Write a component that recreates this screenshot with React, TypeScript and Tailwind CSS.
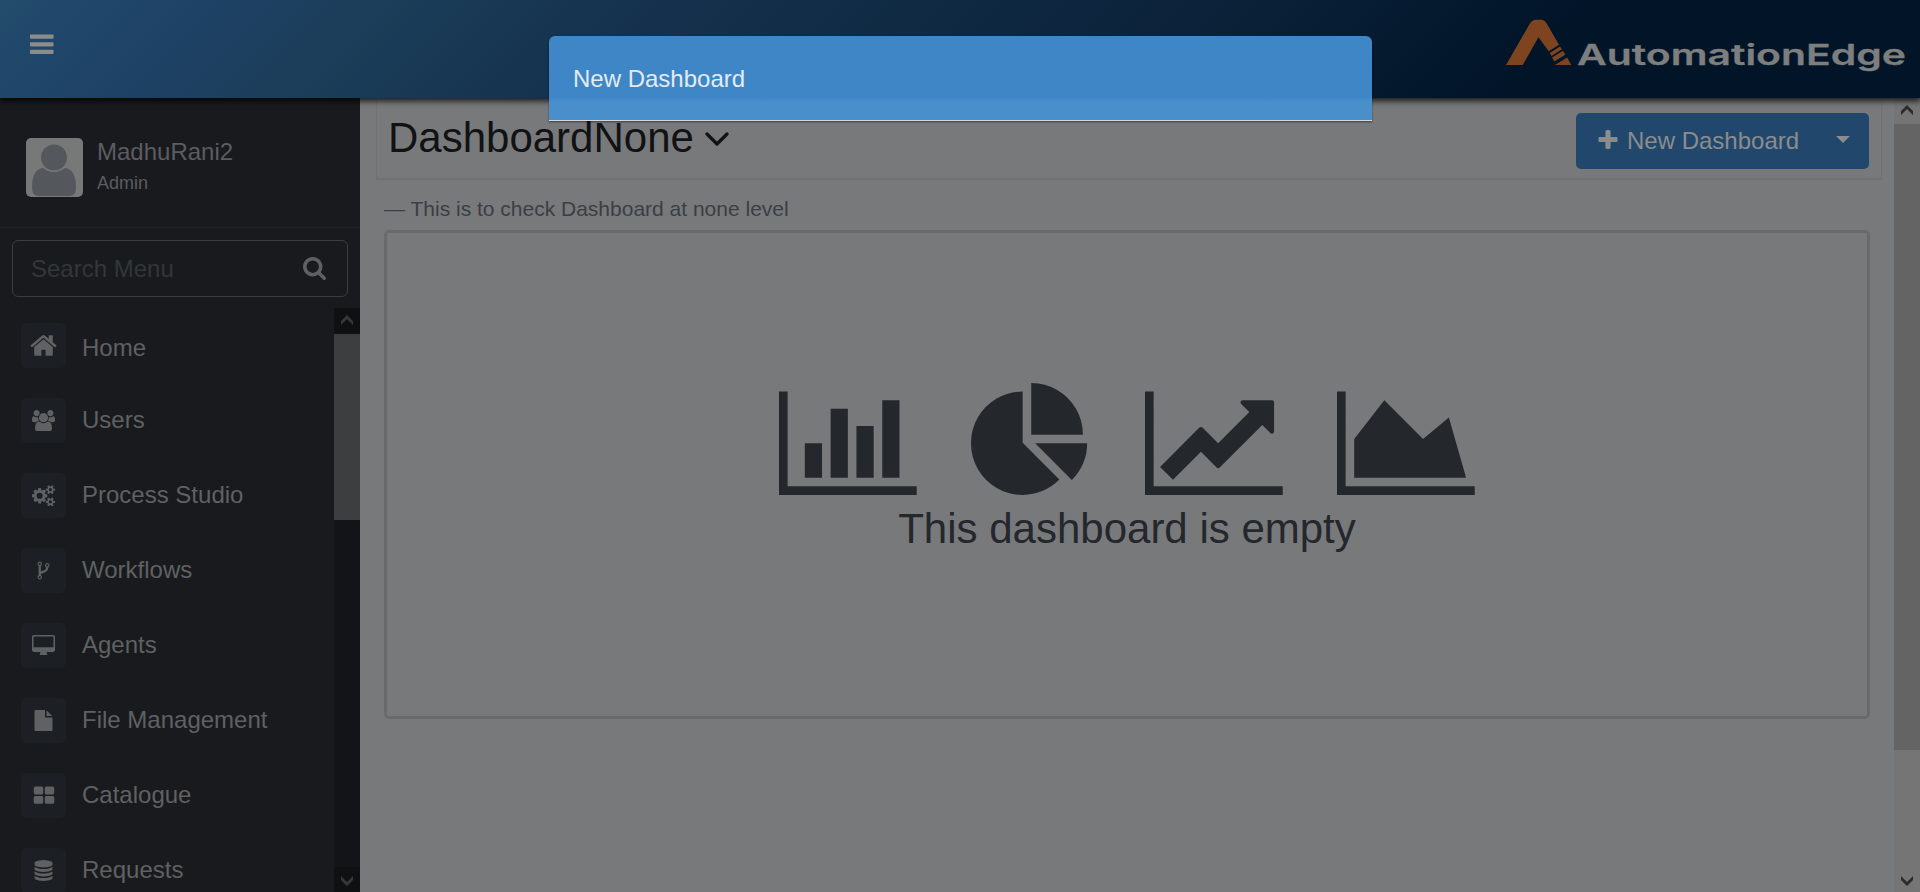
import type { ReactNode } from 'react';

const HOME =
  'M1472 992v480q0 26-19 45t-45 19h-384v-384h-256v384h-384q-26 0-45-19t-19-45v-480q0-1 .5-3t.5-3l575-474 575 474q1 2 1 6zm223-69l-62 74q-8 9-21 11h-3q-13 0-21-7l-692-577-692 577q-12 8-24 7-13-2-21-11l-62-74q-8-10-7-23.5t11-21.5l719-599q32-26 76-26t76 26l244 204v-195q0-14 9-23t23-9h192q14 0 23 9t9 23v408l219 182q10 8 11 21.5t-7 23.500z';
const USERS =
  'M593 896q-162 5-265 128h-134q-82 0-138-40.500t-56-118.500q0-353 124-353 6 0 43.500 21t97.500 42.500 119 21.500q67 0 133-23-5 37-5 66 0 139 81 256zm1071 637q0 120-73 189.500t-194 69.500h-874q-121 0-194-69.500t-73-189.500q0-53 3.500-103.500t14-109 26.500-108.500 43-97.500 62-81 85.500-53.500 111.500-20q10 0 43 21.500t73 48 107 48 135 21.500 135-21.500 107-48 73-48 43-21.500q61 0 111.500 20t85.500 53.500 62 81 43 97.500 26.500 108.500 14 109 3.500 103.500zm-1024-1277q0 106-75 181t-181 75-181-75-75-181 75-181 181-75 181 75 75 181zm704 384q0 159-112.500 271.500t-271.500 112.500-271.500-112.500-112.500-271.500 112.500-271.500 271.500-112.500 271.500 112.500 112.500 271.500zm576 225q0 78-56 118.500t-138 40.500h-134q-103-123-265-128 81-117 81-256 0-29-5-66 66 23 133 23 59 0 119-21.500t97.500-42.500 43.500-21q124 0 124 353zm-128-609q0 106-75 181t-181 75-181-75-75-181 75-181 181-75 181 75 75 181z';
const COGS =
  'M896 896q0-106-75-181t-181-75-181 75-75 181 75 181 181 75 181-75 75-181zm768 512q0-52-38-90t-90-38-90 38-38 90q0 53 37.500 90.500t90.500 37.500 90.500-37.500 37.500-90.500zm0-1024q0-52-38-90t-90-38-90 38-38 90q0 53 37.500 90.500t90.500 37.500 90.500-37.500 37.500-90.500zm-384 421v185q0 10-7 19.500t-16 10.500l-155 24q-11 35-32 76 34 48 90 115 7 11 7 20 0 12-7 19-23 30-82.500 89.500t-78.500 59.500q-11 0-21-7l-115-90q-37 19-77 31-11 108-23 155-7 24-30 24h-186q-11 0-20-7.500t-10-17.500l-23-153q-34-10-75-31l-118 89q-7 7-20 7-11 0-21-8-144-133-144-160 0-9 7-19 10-14 41-53t47-61q-23-44-35-82l-152-24q-10-1-17-9.500t-7-19.500v-185q0-10 7-19.500t16-10.500l155-24q11-35 32-76-34-48-90-115-7-11-7-20 0-12 7-20 22-30 82-89t79-59q11 0 21 7l115 90q34-18 77-32 11-108 23-154 7-24 30-24h186q11 0 20 7.500t10 17.500l23 153q34 10 75 31l118-89q8-7 20-7 11 0 21 8 144 133 144 160 0 8-7 19-12 16-42 54t-45 60q23 48 34 82l152 23q10 2 17 10.500t7 19.500zm640 533v140q0 16-149 31-12 27-30 52 51 113 51 138 0 4-4 7-122 71-124 71-8 0-46-47t-52-68q-20 2-30 2t-30-2q-14 21-52 68t-46 47q-2 0-124-71-4-3-4-7 0-25 51-138-18-25-30-52-149-15-149-31v-140q0-16 149-31 13-29 30-52-51-113-51-138 0-4 4-7 4-2 35-20t59-34 30-16q8 0 46 46.500t52 67.500q20-2 30-2t30 2q51-71 92-112l6-2q4 0 124 70 4 3 4 7 0 25-51 138 17 23 30 52 149 15 149 31zm0-1024v140q0 16-149 31-12 27-30 52 51 113 51 138 0 4-4 7-122 71-124 71-8 0-46-47t-52-68q-20 2-30 2t-30-2q-14 21-52 68t-46 47q-2 0-124-71-4-3-4-7 0-25 51-138-18-25-30-52-149-15-149-31v-140q0-16 149-31 13-29 30-52-51-113-51-138 0-4 4-7 4-2 35-20t59-34 30-16q8 0 46 46.500t52 67.500q20-2 30-2t30 2q51-71 92-112l6-2q4 0 124 70 4 3 4 7 0 25-51 138 17 23 30 52 149 15 149 31z';
const FORK =
  'M672 1472q0-40-28-68t-68-28-68 28-28 68 28 68 68 28 68-28 28-68zm0-1152q0-40-28-68t-68-28-68 28-28 68 28 68 68 28 68-28 28-68zm640 128q0-40-28-68t-68-28-68 28-28 68 28 68 68 28 68-28 28-68zm96 0q0 52-26 96.500t-70 69.500q-2 287-226 414-67 38-203 81-128 40-169.500 71t-41.500 100v26q44 25 70 69.500t26 96.500q0 80-56 136t-136 56-136-56-56-136q0-52 26-96.500t70-69.500v-820q-44-25-70-69.500t-26-96.500q0-80 56-136t136-56 136 56 56 136q0 52-26 96.500t-70 69.500v497q54-26 154-57 55-17 87.500-29.500t70.500-31 59-39.500 40.500-51 28-69.500 8.500-91.500q-44-25-70-69.500t-26-96.500q0-80 56-136t136-56 136 56 56 136z';
const DESKTOP =
  'M1792 992v-832q0-13-9.500-22.500t-22.500-9.500h-1600q-13 0-22.500 9.500t-9.500 22.500v832q0 13 9.500 22.500t22.500 9.500h1600q13 0 22.500-9.500t9.500-22.500zm128-832v1088q0 66-47 113t-113 47h-544q0 37 16 77.500t32 71 16 43.500q0 26-19 45t-45 19h-512q-26 0-45-19t-19-45q0-14 16-44t32-70 16-78h-544q-66 0-113-47t-47-113v-1088q0-66 47-113t113-47h1600q66 0 113 47t47 113z';
const FILE =
  'M1152 512v-472q22 14 36 28l408 408q14 14 28 36h-472zm-128 32q0 40 28 68t68 28h544v1056q0 40-28 68t-68 28h-1344q-40 0-68-28t-28-68v-1600q0-40 28-68t68-28h800v544z';
const GRID =
  'M832 1024v384q0 52-38 90t-90 38h-512q-52 0-90-38t-38-90v-384q0-52 38-90t90-38h512q52 0 90 38t38 90zm0-768v384q0 52-38 90t-90 38h-512q-52 0-90-38t-38-90v-384q0-52 38-90t90-38h512q52 0 90 38t38 90zm896 768v384q0 52-38 90t-90 38h-512q-52 0-90-38t-38-90v-384q0-52 38-90t90-38h512q52 0 90 38t38 90zm0-768v384q0 52-38 90t-90 38h-512q-52 0-90-38t-38-90v-384q0-52 38-90t90-38h512q52 0 90 38t38 90z';
const DATABASE =
  'M896 768q237 0 443-43t325-127v170q0 69-103 128t-280 93.500-385 34.500-385-34.500-280-93.500-103-128v-170q119 84 325 127t443 43zm0 768q237 0 443-43t325-127v170q0 69-103 128t-280 93.500-385 34.500-385-34.500-280-93.500-103-128v-170q119 84 325 127t443 43zm0-384q237 0 443-43t325-127v170q0 69-103 128t-280 93.500-385 34.500-385-34.500-280-93.500-103-128v-170q119 84 325 127t443 43zm0-1152q208 0 385 34.500t280 93.500 103 128v128q0 69-103 128t-280 93.500-385 34.500-385-34.500-280-93.500-103-128v-128q0-69 103-128t280-93.500 385-34.500z';
const SEARCH =
  'M1216 832q0-185-131.500-316.500t-316.500-131.500-316.500 131.500-131.500 316.500 131.500 316.500 316.500 131.500 316.500-131.500 131.500-316.500zm512 832q0 52-38 90t-90 38q-54 0-90-38l-343-342q-179 124-399 124-143 0-273.500-55.500t-225-150-150-225-55.500-273.500 55.500-273.500 150-225 225-150 273.500-55.500 273.500 55.500 225 150 150 225 55.500 273.500q0 220-124 399l343 343q37 37 37 90z';
const PLUS =
  'M1600 736v192q0 40-28 68t-68 28h-416v416q0 40-28 68t-68 28h-192q-40 0-68-28t-28-68v-416h-416q-40 0-68-28t-28-68v-192q0-40 28-68t68-28h416v-416q0-40 28-68t68-28h192q40 0 68 28t28 68v416h416q40 0 68 28t28 68z';

const BAR_CHART =
  'M640 896v512h-256v-512h256zm384-512v1024h-256v-1024h256zm1024 1152v128h-2048v-1536h128v1408h1920zm-640-896v768h-256v-768h256zm384-384v1152h-256v-1152h256z';
const PIE_CHART =
  'M768 890l546 546q-106 108-247.500 168t-298.500 60q-209 0-385.500-103t-279.500-279.500-103-385.500 103-385.500 279.500-279.500 385.500-103v762zm187 6h773q0 157-60 298.500t-168 247.500zm709-128h-768v-768q209 0 385.500 103t279.500 279.500 103 385.500z';
const LINE_CHART =
  'M2048 1536v128h-2048v-1536h128v1408h1920zm-128-1248v435q0 21-19.500 29.500t-35.500-7.500l-121-121-633 633q-10 10-23 10t-23-10l-233-233-416 416-192-192 585-585q10-10 23-10t23 10l233 233 464-464-121-121q-16-16-7.500-35.500t29.500-19.500h435q14 0 23 9t9 23z';
const AREA_CHART = 'M2048 1536v128h-2048v-1536h128v1408h1920zm-384-1024l256 896h-1664v-576l448-576 576 576z';

type MenuEntry = { label: string; path: string; box: string; size: string; text: string };

const MENU: MenuEntry[] = [
  { label: 'Home', path: HOME, box: '0 0 1792 1792', size: 'w-[29px] h-[29px] -mt-px', text: 'pt-[3px]' },
  { label: 'Users', path: USERS, box: '0 0 1920 1792', size: 'w-[23px] h-[21.500px]', text: '' },
  { label: 'Process Studio', path: COGS, box: '0 0 1920 1792', size: 'w-[23px] h-[21.500px]', text: '' },
  { label: 'Workflows', path: FORK, box: '0 0 1792 1792', size: 'w-[21px] h-[21px]', text: '' },
  { label: 'Agents', path: DESKTOP, box: '0 0 1920 1792', size: 'w-[23px] h-[21.500px] mt-px', text: '' },
  { label: 'File Management', path: FILE, box: '0 0 1792 1792', size: 'w-[21px] h-[21px]', text: '' },
  { label: 'Catalogue', path: GRID, box: '0 0 1792 1792', size: 'w-[22px] h-[22px]', text: '' },
  { label: 'Requests', path: DATABASE, box: '0 0 1792 1792', size: 'w-[21px] h-[21px]', text: '' },
];

function Glyph({ path, box, className }: { path: string; box: string; className: string }) {
  return (
    <svg viewBox={box} className={`block shrink-0 ${className}`} fill="currentColor">
      <path d={path} />
    </svg>
  );
}

function Arrow({ down = false }: { down?: boolean }) {
  return (
    <svg viewBox="0 0 12 10" className="h-[10px] w-[12px]" fill="currentColor">
      <path d={down ? 'M0 0L6 6L12 0V4L6 10L0 4Z' : 'M0 10L6 4L12 10V6L6 0L0 6Z'} />
    </svg>
  );
}

function ScrollButton({ className, children }: { className: string; children: ReactNode }) {
  return <div className={`flex shrink-0 items-start justify-center ${className}`}>{children}</div>;
}

function Header() {
  return (
    <header className="relative z-10 flex h-[98px] shrink-0 items-start justify-between bg-[linear-gradient(135deg,#224b6c_0%,#1e4266_10%,#1b3d58_20%,#15324e_31%,#0a2138_62%,#011428_79%,#011428_100%)] shadow-[0_2px_6px_1px_rgba(0,0,0,0.8)]">
      <svg viewBox="0 0 24 20" className="mt-[34px] ml-[30px] h-[20px] w-[24px]" fill="#8b8c8c">
        <rect x="0" y="0.500" width="23.500" height="4.200" rx="0.700" />
        <rect x="0" y="8.200" width="23.500" height="4.200" rx="0.700" />
        <rect x="0" y="15.800" width="23.500" height="4.200" rx="0.700" />
      </svg>
      <svg viewBox="0 0 414 98" className="h-[98px] w-[414px]">
        <g fill="#7e431f">
          <path d="M0 65L23.300 24.500Q26 19.800 30 19.800H35Q38.500 19.800 41 24L53 44.700L42.700 51.300L32.500 37.300L16.700 65Z" />
          <path d="M43.700 53L54 46.500L56 49.300L45.500 56Z" />
          <path d="M46 57.500L57 50.800L59.300 54.800L48.300 61.500Z" />
          <path d="M48.700 65L61.200 57.500L65.300 65Z" />
        </g>
        <text
          x="71"
          y="64.700"
          textLength="329"
          lengthAdjust="spacingAndGlyphs"
          className="font-[Inter,sans-serif] text-[28.500px] font-semibold"
          fill="#7d7e7e"
          stroke="#7d7e7e"
          strokeWidth="0.300"
        >
          AutomationEdge
        </text>
      </svg>
    </header>
  );
}

function Sidebar() {
  return (
    <aside className="flex w-[360px] shrink-0 flex-col bg-[#191a1d]">
      <div className="flex h-[130px] shrink-0 border-b border-[#222326] pt-[40px] pl-[26px]">
        <svg viewBox="0 0 57 59" className="h-[59px] w-[57px]">
          <rect width="57" height="59" rx="5" fill="#777878" />
          <path d="M6 50Q6 31 17 30Q28 38 39 30Q50 31 50 50Q50 58 43 58H13Q6 58 6 50Z" fill="#54585c" />
          <circle cx="28" cy="19.500" r="14.300" fill="#777878" />
          <circle cx="28" cy="19.500" r="13" fill="#54585c" />
        </svg>
        <div className="ml-[14px] flex flex-col">
          <span className="text-[24px] leading-[28px] text-[#5b5c63]">MadhuRani2</span>
          <span className="mt-[5px] text-[18px] leading-[24px] text-[#5b5c63]">Admin</span>
        </div>
      </div>
      <div className="mx-[12px] mt-[12px] flex h-[57px] shrink-0 items-center justify-between rounded-[6px] border border-[#3b3c3f] pr-[21px] pl-[18px]">
        <span className="text-[24px] leading-[28px] text-[#31373b]">Search Menu</span>
        <Glyph path={SEARCH} box="64 128 1664 1664" className="h-[23px] w-[23px] text-[#5f6061]" />
      </div>
      <div className="mt-[11px] flex min-h-0 flex-1">
        <nav className="flex flex-1 flex-col gap-[30px] overflow-hidden pt-[15px] pl-[21px]">
          {MENU.map((item) => (
            <div key={item.label} className="flex h-[45px] shrink-0 gap-[16px]">
              <div className="flex h-[45px] w-[45px] items-center justify-center rounded-[6px] bg-[#1c2024] text-[#5f6162]">
                <Glyph path={item.path} box={item.box} className={item.size} />
              </div>
              <span className={`text-[24px] leading-[43px] text-[#5f6162] ${item.text}`}>{item.label}</span>
            </div>
          ))}
        </nav>
        <div className="flex w-[26px] flex-col justify-between bg-[#131417] text-[#363738]">
          <div>
            <ScrollButton className="h-[26px] bg-[#0f1012] pt-[7px]">
              <Arrow />
            </ScrollButton>
            <div className="h-[186px] bg-[#3d3e3f]" />
          </div>
          <ScrollButton className="h-[25px] bg-[#0f1012] pt-[9px]">
            <Arrow down />
          </ScrollButton>
        </div>
      </div>
    </aside>
  );
}

function Content() {
  return (
    <main className="flex min-w-0 flex-1 bg-[#78797b]">
      <section className="flex flex-1 flex-col pr-[12px] pl-[16px]">
        <div className="flex h-[81px] shrink-0 justify-between border border-t-0 border-[#707173] px-[12px] shadow-[0_1px_1px_rgba(0,0,0,0.06)]">
          <div className="flex items-start">
            <h1 className="mt-[16px] -ml-px text-[42px] leading-[48px] text-[#111214]">DashboardNone</h1>
            <svg
              viewBox="0 0 24 14"
              className="mt-[34px] ml-[11px] h-[14px] w-[24px]"
              fill="none"
              stroke="#111214"
              strokeWidth="3.200"
              strokeLinecap="round"
              strokeLinejoin="round"
            >
              <path d="M2 2L12 12L22 2" />
            </svg>
          </div>
          <div className="mt-[15px] flex h-[56px] w-[293px] items-center rounded-[5px] bg-[#21486c] text-[#8b8c8d]">
            <Glyph path={PLUS} box="192 128 1408 1408" className="-mt-[3px] ml-[22px] h-[19px] w-[20px]" />
            <span className="ml-[9px] text-[24px] leading-[28px]">New Dashboard</span>
            <svg viewBox="0 0 14 7" className="-mt-[3px] mr-[19px] ml-auto h-[7px] w-[14px]" fill="currentColor">
              <path d="M0 0H14L7 7Z" />
            </svg>
          </div>
        </div>
        <p className="mt-[18px] ml-[8px] text-[21px] leading-[24px] text-[#3a3f44]">
          — This is to check Dashboard at none level
        </p>
        <div className="mt-[9px] mr-[12px] ml-[8px] flex h-[489px] flex-col items-center rounded-[5px] border-[3px] border-[#696a6c] text-[#24272c]">
          <div className="mt-[150px] flex gap-[54px]">
            <Glyph path={BAR_CHART} box="0 0 2048 1792" className="h-[120.500px] w-[137.700px]" />
            <Glyph path={PIE_CHART} box="0 0 1792 1792" className="h-[120.500px] w-[120.500px]" />
            <Glyph path={LINE_CHART} box="0 0 2048 1792" className="h-[120.500px] w-[137.700px]" />
            <Glyph path={AREA_CHART} box="0 0 2048 1792" className="h-[120.500px] w-[137.700px]" />
          </div>
          <p className="mt-[1.500px] text-[42px] leading-[48px]">This dashboard is empty</p>
        </div>
      </section>
      <div className="flex w-[26px] shrink-0 flex-col justify-between bg-[#757575] text-[#2b2b2b]">
        <div>
          <ScrollButton className="h-[26px] pt-[7px]">
            <Arrow />
          </ScrollButton>
          <div className="h-[626px] bg-[#646464]" />
        </div>
        <ScrollButton className="h-[26px] pt-[10px]">
          <Arrow down />
        </ScrollButton>
      </div>
    </main>
  );
}

export default function App() {
  return (
    <div className="relative flex h-[892px] w-[1920px] flex-col overflow-hidden font-['Liberation_Sans',Arial,sans-serif]">
      <Header />
      <div className="flex min-h-0 flex-1">
        <Sidebar />
        <Content />
      </div>
      <div className="absolute top-[36px] left-[549px] z-20 h-[85px] w-[823px] rounded-t-[6px] border-b border-[#d5dade] bg-[linear-gradient(to_bottom,#3e86c6_0px,#3e86c6_61px,#488fcc_66px,#488fcc_100%)] pt-[28px] pl-[24px] text-[24px] leading-[30px] text-[#e4ebf2] shadow-[0_1px_2px_rgba(0,0,0,0.5)]">
        New Dashboard
      </div>
    </div>
  );
}
